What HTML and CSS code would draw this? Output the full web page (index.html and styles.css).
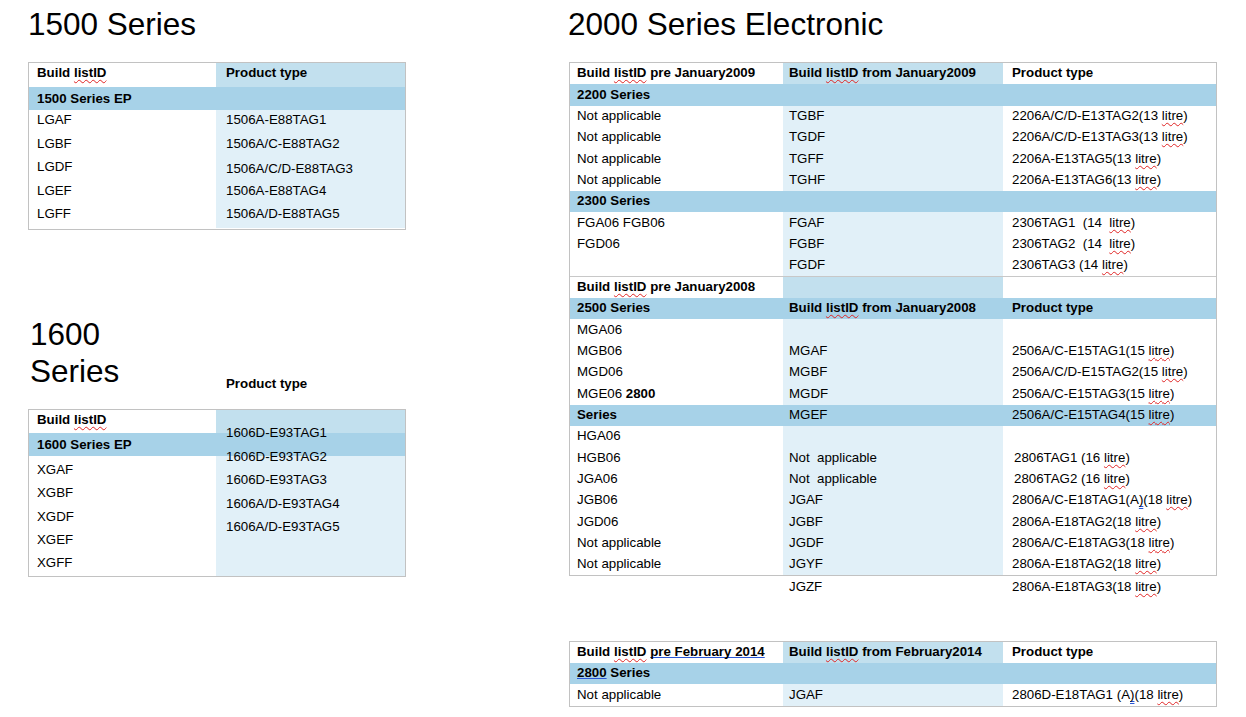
FILE: index.html
```html
<!DOCTYPE html>
<html lang="en">
<head>
<meta charset="utf-8">
<title>Series build lists</title>
<link rel="stylesheet" href="styles.css">
</head>
<body>
<div class="page">
  <div class="left">
    <h1 class="title t1500">1500 Series</h1>
    <div class="ltable t1">
      <div class="lrow head"><div class="c1 b">Build <span class="sp">listID</span></div><div class="c2 b hd">Product type</div></div>
      <div class="lrow lsec"><div class="c1 b">1500 Series EP</div></div>
      <div class="lrow data"><div class="c1">LGAF</div><div class="c2">1506A-E88TAG1</div></div>
      <div class="lrow data"><div class="c1">LGBF</div><div class="c2">1506A/C-E88TAG2</div></div>
      <div class="lrow data"><div class="c1">LGDF</div><div class="c2 low">1506A/C/D-E88TAG3</div></div>
      <div class="lrow data"><div class="c1">LGEF</div><div class="c2">1506A-E88TAG4</div></div>
      <div class="lrow data"><div class="c1">LGFF</div><div class="c2">1506A/D-E88TAG5</div></div>
    </div>

    <div class="t1600row">
      <div class="t1600cell"><h1 class="title t1600">1600 Series</h1></div>
      <div class="flabel b">Product type</div>
    </div>
    <div class="ltable t2">
      <div class="t2h1 c1 b">Build <span class="sp">listID</span></div>
      <div class="t2h2"></div>
      <div class="t2sec c1 b">1600 Series EP</div>
      <div class="t2col1">
        <div class="c1">XGAF</div>
        <div class="c1">XGBF</div>
        <div class="c1">XGDF</div>
        <div class="c1">XGEF</div>
        <div class="c1">XGFF</div>
      </div>
      <div class="t2col2bg"></div>
      <div class="t2prod">
        <div>1606D-E93TAG1</div>
        <div>1606D-E93TAG2</div>
        <div>1606D-E93TAG3</div>
        <div>1606A/D-E93TAG4</div>
        <div>1606A/D-E93TAG5</div>
      </div>
    </div>
  </div>

  <div class="right">
    <h1 class="title title-r">2000 Series Electronic</h1>
    <div class="rtable big">
      <div class="rrow hdr"><div class="b">Build <span class="sp">listID</span> pre January2009</div><div class="b">Build <span class="sp">listID</span> from January2009</div><div class="b">Product type</div></div>
      <div class="rrow sec"><div class="b">2200 Series</div><div></div><div></div></div>
      <div class="rrow"><div>Not applicable</div><div>TGBF</div><div>2206A/C/D-E13TAG2(13 <span class="sp">litre</span>)</div></div>
      <div class="rrow"><div>Not applicable</div><div>TGDF</div><div>2206A/C/D-E13TAG3(13 <span class="sp">litre</span>)</div></div>
      <div class="rrow"><div>Not applicable</div><div>TGFF</div><div>2206A-E13TAG5(13 <span class="sp">litre</span>)</div></div>
      <div class="rrow"><div>Not applicable</div><div>TGHF</div><div>2206A-E13TAG6(13 <span class="sp">litre</span>)</div></div>
      <div class="rrow sec"><div class="b">2300 Series</div><div></div><div></div></div>
      <div class="rrow"><div>FGA06 FGB06</div><div>FGAF</div><div>2306TAG1&nbsp; (14&nbsp; <span class="sp">litre</span>)</div></div>
      <div class="rrow"><div>FGD06</div><div>FGBF</div><div>2306TAG2&nbsp; (14&nbsp; <span class="sp">litre</span>)</div></div>
      <div class="rrow"><div></div><div>FGDF</div><div>2306TAG3 (14 <span class="sp">litre</span>)</div></div>
      <div class="rrow hdr split"><div class="b">Build <span class="sp">listID</span> pre January2008</div><div></div><div></div></div>
      <div class="rrow sec"><div class="b">2500 Series</div><div class="b">Build <span class="sp">listID</span> from January2008</div><div class="b">Product type</div></div>
      <div class="rrow"><div>MGA06</div><div></div><div></div></div>
      <div class="rrow"><div>MGB06</div><div>MGAF</div><div>2506A/C-E15TAG1(15 <span class="sp">litre</span>)</div></div>
      <div class="rrow"><div>MGD06</div><div>MGBF</div><div>2506A/C/D-E15TAG2(15 <span class="sp">litre</span>)</div></div>
      <div class="rrow"><div>MGE06 <span class="b">2800</span></div><div>MGDF</div><div>2506A/C-E15TAG3(15 <span class="sp">litre</span>)</div></div>
      <div class="rrow sec"><div class="b">Series</div><div>MGEF</div><div>2506A/C-E15TAG4(15 <span class="sp">litre</span>)</div></div>
      <div class="rrow"><div>HGA06</div><div></div><div></div></div>
      <div class="rrow"><div>HGB06</div><div>Not&nbsp; applicable</div><div class="ind">2806TAG1 (16 <span class="sp">litre</span>)</div></div>
      <div class="rrow"><div>JGA06</div><div>Not&nbsp; applicable</div><div class="ind">2806TAG2 (16 <span class="sp">litre</span>)</div></div>
      <div class="rrow"><div>JGB06</div><div>JGAF</div><div>2806A/C-E18TAG1(A<span class="gr2">)</span>(18 <span class="sp">litre</span>)</div></div>
      <div class="rrow"><div>JGD06</div><div>JGBF</div><div>2806A-E18TAG2(18 <span class="sp">litre</span>)</div></div>
      <div class="rrow"><div>Not applicable</div><div>JGDF</div><div>2806A/C-E18TAG3(18 <span class="sp">litre</span>)</div></div>
      <div class="rrow"><div>Not applicable</div><div>JGYF</div><div>2806A-E18TAG2(18 <span class="sp">litre</span>)</div></div>
    </div>
    <div class="after">
      <div class="rrow plain"><div></div><div>JGZF</div><div>2806A-E18TAG3(18 <span class="sp">litre</span>)</div></div>
    </div>

    <div class="rtable small">
      <div class="rrow hdr"><div class="b">Build <span class="sp">listID</span> <span class="gr">pre February 2014</span></div><div class="b">Build <span class="sp">listID</span> from February2014</div><div class="b">Product type</div></div>
      <div class="rrow sec"><div class="b"><span class="gr">2800</span> Series</div><div></div><div></div></div>
      <div class="rrow"><div>Not applicable</div><div>JGAF</div><div>2806D-E18TAG1 (A<span class="gr2">)</span>(18 <span class="sp">litre</span>)</div></div>
    </div>
  </div>
</div>
</body>
</html>
```

FILE: styles.css
```css
* { box-sizing: border-box; }

html, body {
  margin: 0;
  padding: 0;
  background: #ffffff;
}

body {
  font-family: "Liberation Sans", Arial, sans-serif;
  font-size: 13.3px;
  color: #000000;
}

.page {
  display: flex;
  align-items: flex-start;
}

.b { font-weight: bold; }

.sp {
  text-decoration: underline wavy #e02424;
  text-decoration-thickness: 1px;
  text-underline-offset: 2px;
  text-decoration-skip-ink: none;
}

.gr {
  text-decoration: underline #2a57d6;
  text-decoration-thickness: 1px;
  text-underline-offset: 1px;
  text-decoration-skip-ink: none;
}

.gr2 {
  text-decoration: underline double #2a57d6;
  text-decoration-thickness: 1px;
  text-underline-offset: 2px;
  text-decoration-skip-ink: none;
}

/* titles */
.title {
  font-size: 31.5px;
  font-weight: normal;
  line-height: 36px;
  margin: 6px 0 0 0;
  color: #000;
}

.t1500 { margin-left: 0; }
.title-r { margin-left: -1px; }

/* left column */
.left {
  margin-left: 28px;
  width: 378px;
  flex: none;
}

.ltable {
  border: 1px solid #c2c2c2;
  background: #ffffff;
}

.t1 {
  margin-top: 20px;
  padding-bottom: 1.5px;
}

.lrow {
  display: grid;
  grid-template-columns: 187px 189px;
  line-height: 16px;
}

.c1 { padding-left: 8px; }
.c2 { padding-left: 10px; }

.head { height: 24px; }
.head > div { padding-top: 2px; }
.hd { background: #c2e0ee; }

.lsec {
  height: 23px;
  background: #a7d2e8;
}
.lsec > div { padding-top: 3.5px; }

.data { height: 23.5px; }
.data > div { padding-top: 2px; }
.data .c2 { background: #e1f0f8; }
.data .low { padding-top: 4px; }

/* 1600 heading */
.t1600row {
  margin-top: 85.6px;
  display: grid;
  grid-template-columns: 188px 1fr;
  align-items: end;
}

.t1600cell { padding-left: 2px; }

.t1600 {
  margin: 0;
  line-height: 37px;
  max-width: 130px;
}

.flabel {
  padding-left: 10px;
  line-height: 16px;
  margin-bottom: -2.4px;
}

/* table 2 (overlapping product column) */
.t2 {
  margin-top: 19.4px;
  display: grid;
  grid-template-columns: 187px 189px;
  grid-template-rows: 23px 23px 120px;
  line-height: 16px;
}

.t2h1 {
  grid-area: 1 / 1 / 2 / 2;
  padding-top: 2px;
}

.t2h2 {
  grid-area: 1 / 2 / 2 / 3;
  background: #c2e0ee;
}

.t2sec {
  grid-area: 2 / 1 / 3 / 3;
  background: #a7d2e8;
  padding-top: 4px;
}

.t2col1 {
  grid-area: 3 / 1 / 4 / 2;
}

.t2col1 > div {
  height: 23.3px;
  padding-top: 6px;
}

.t2col2bg {
  grid-area: 3 / 2 / 4 / 3;
  background: #e1f0f8;
}

.t2prod {
  grid-area: 1 / 2 / 4 / 3;
  z-index: 1;
  padding: 11.3px 0 0 10px;
  line-height: 23.4px;
}

/* right column */
.right {
  margin-left: 163px;
  width: 648px;
  flex: none;
}

.rtable {
  border: 1px solid #c2c2c2;
}

.big { margin-top: 20px; }
.small { margin-top: 43px; }

.rrow {
  display: grid;
  grid-template-columns: 213px 220px 213px;
  height: 21.35px;
  line-height: 16px;
}

.rrow > div {
  padding-top: 2.4px;
  white-space: nowrap;
}

.rrow > div:nth-child(1) { padding-left: 7px; }
.rrow > div:nth-child(2) { padding-left: 6px; background: #e1f0f8; }
.rrow > div:nth-child(3) { padding-left: 9px; }
.rrow > div.ind { padding-left: 11px; }

.rrow.hdr > div:nth-child(2) { background: #c2e0ee; }

.rrow.sec { background: #a7d2e8; }
.rrow.sec > div:nth-child(2) { background: transparent; }

.rrow.split { border-top: 1px solid #c8c8c8; }
.rrow.split > div { padding-top: 1.4px; }

.after { padding-left: 1px; }
.rrow.plain > div:nth-child(2) { background: transparent; }
```
